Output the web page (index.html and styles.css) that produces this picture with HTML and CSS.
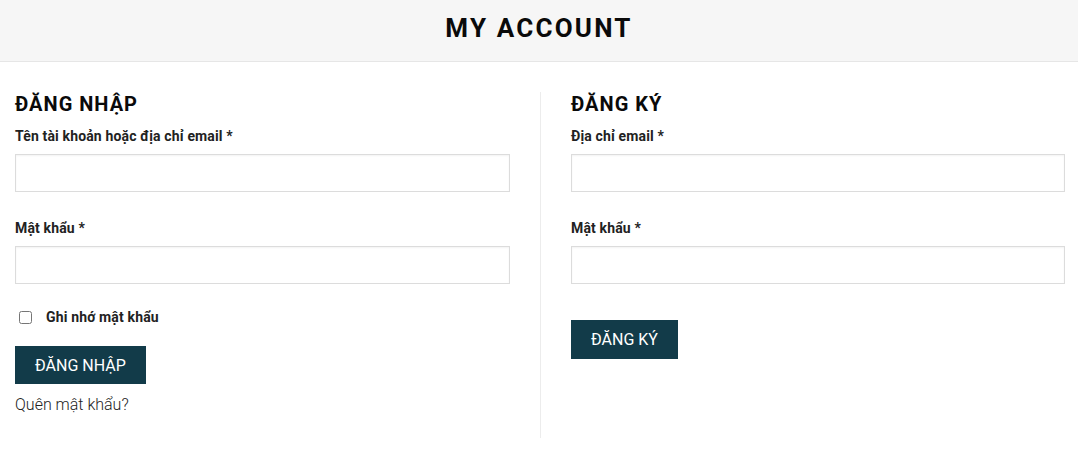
FILE: index.html
```html
<!DOCTYPE html>
<html lang="vi">
<head>
<meta charset="utf-8">
<title>My Account</title>
<link rel="stylesheet" href="styles.css">
</head>
<body>
<header class="page-header">
  <h1 class="page-title">MY ACCOUNT</h1>
</header>
<main class="account">
  <section class="col col-login">
    <h2 class="col-title">ĐĂNG NHẬP</h2>
    <form class="form">
      <label class="field-label">Tên tài khoản hoặc địa chỉ email *</label>
      <input class="field-input" type="text">
      <label class="field-label">Mật khẩu *</label>
      <input class="field-input" type="password">
      <label class="remember"><input type="checkbox" class="remember-box"><span>Ghi nhớ mật khẩu</span></label>
      <button type="button" class="btn">ĐĂNG NHẬP</button>
      <a class="lost" href="#">Quên mật khẩu?</a>
    </form>
  </section>
  <section class="col col-register">
    <h2 class="col-title">ĐĂNG KÝ</h2>
    <form class="form">
      <label class="field-label">Địa chỉ email *</label>
      <input class="field-input" type="email">
      <label class="field-label">Mật khẩu *</label>
      <input class="field-input" type="password">
      <button type="button" class="btn btn-register">ĐĂNG KÝ</button>
    </form>
  </section>
</main>
</body>
</html>
```
FILE: styles.css
```css
* { box-sizing: border-box; }
html, body { margin: 0; padding: 0; background: #fff; }
body {
  font-family: Roboto, "Liberation Sans", Arial, sans-serif;
  color: #111;
}
.page-header {
  height: 62px;
  background: #f6f6f6;
  border-bottom: 1px solid #e6e6e6;
  display: flex;
  align-items: center;
  justify-content: center;
}
.page-title {
  margin: 0 0 5px;
  font-size: 26px;
  font-weight: 700;
  letter-spacing: 2.2px;
  color: #0a0a0a;
  line-height: 1;
}
.account {
  display: flex;
  padding-top: 30px;
}
.col-login {
  width: 540px;
  padding: 0 30px 21px 15px;
}
.col-register {
  flex: 1;
  border-left: 1px solid #ececec;
  padding: 0 13px 0 30px;
}
.col-title {
  margin: 0;
  font-size: 20px;
  font-weight: 700;
  letter-spacing: 1px;
  line-height: 24px;
  color: #0a0a0a;
}
.form {
  display: flex;
  flex-direction: column;
  align-items: flex-start;
}
.field-label {
  font-size: 14px;
  font-weight: 700;
  letter-spacing: 0.15px;
  color: #222;
  line-height: 20px;
  margin-top: 10px;
}
.field-label + .field-input { margin-top: 8px; }
.field-input + .field-label { margin-top: 26px; }
.field-input {
  width: 100%;
  height: 38px;
  border: 1px solid #dcdcdc;
  box-shadow: inset 0 1px 2px rgba(0,0,0,0.05);
  background: #fff;
  margin: 0;
  font: inherit;
}
.remember {
  display: flex;
  align-items: center;
  margin-top: 25px;
  font-size: 14px;
  font-weight: 700;
  letter-spacing: 0.15px;
  color: #222;
  line-height: 16px;
}
.remember-box {
  width: 13px;
  height: 13px;
  margin: 0 14px 0 4px;
}
.btn {
  margin-top: 21px;
  height: 38px;
  padding: 0 20px;
  background: #123b49;
  color: #fff;
  border: 0;
  border-radius: 0;
  font-family: Roboto, "Liberation Sans", Arial, sans-serif;
  font-size: 16px;
  font-weight: 400;
  cursor: pointer;
}
.btn-register { margin-top: 36px; height: 39px; }
.lost {
  margin-top: 9px;
  font-size: 16px;
  font-weight: 300;
  color: #222;
  text-decoration: none;
  line-height: 24px;
}
```
